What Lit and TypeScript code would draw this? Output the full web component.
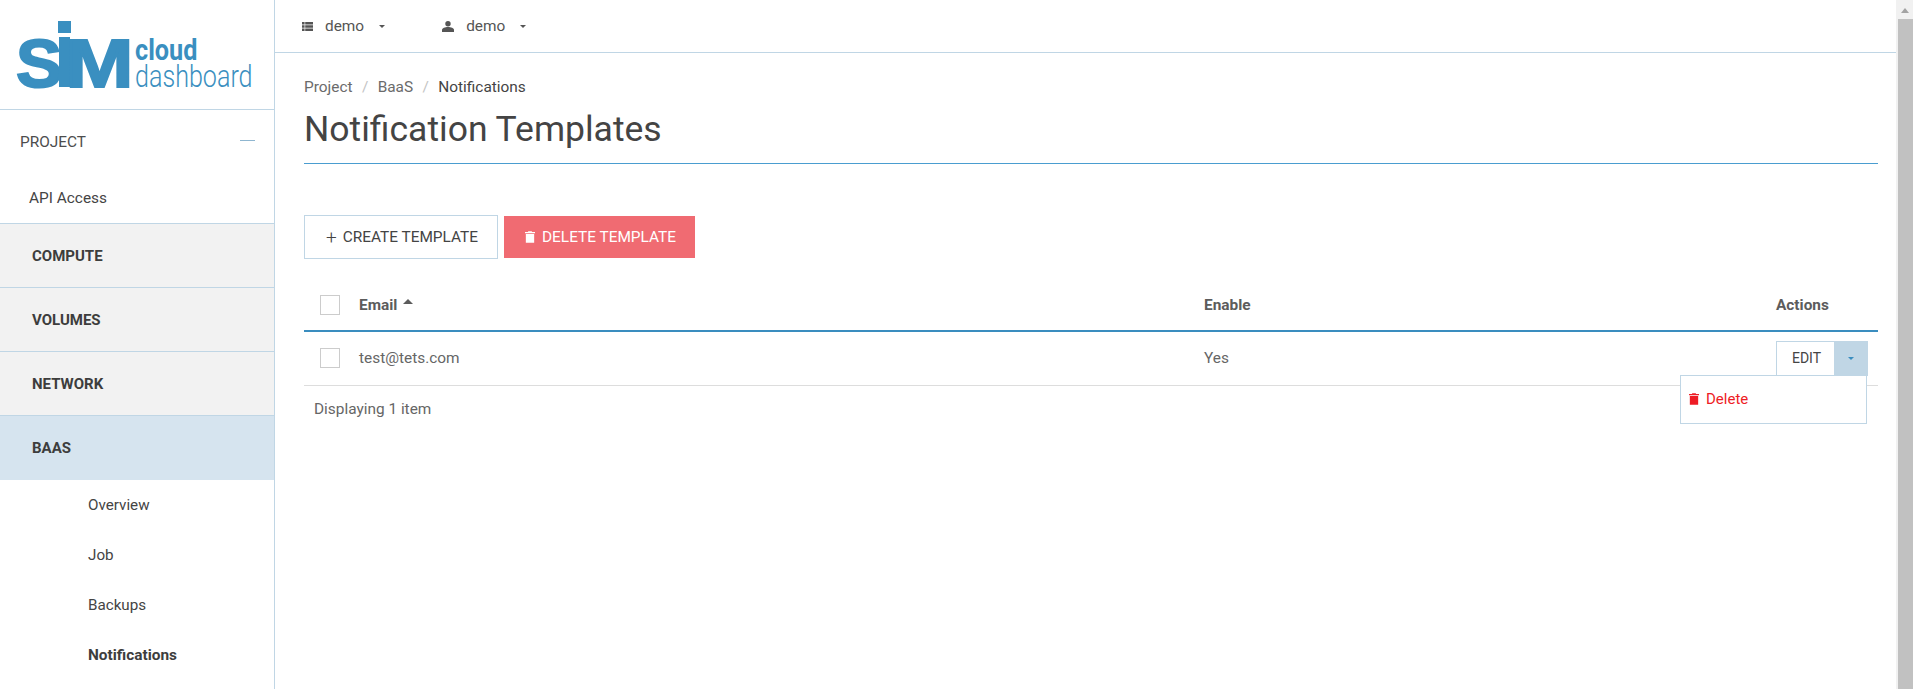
import { LitElement, html, css, svg } from "lit";
import { customElement } from "lit/decorators.js";

const trash = () => svg`<svg viewBox="0 0 12 14" width="10" height="12"><path fill="currentColor" d="M4 0h4l.6 1H12v1.6H0V1h3.4zM1 3.4h10V14H1z"/></svg>`;

@customElement("app-root")
export class AppRoot extends LitElement {
  static styles = css`
    :host { display: flex; height: 689px; overflow: hidden; font-family: Roboto, "Liberation Sans", sans-serif; font-size: 15.4px; color: #555; background: #fff; }
    * { box-sizing: border-box; }
    .side { width: 275px; flex: none; height: 689px; border-right: 1px solid #c0d6e5; overflow: hidden; }
    .logo { height: 110px; border-bottom: 1px solid #c0d6e5; }
    .logo svg { display: block; }
    .proj { height: 114px; border-bottom: 1px solid #c0d6e5; }
    .proj-head { display: flex; justify-content: space-between; align-items: center; padding: 0 19px 0 20px; height: 63px; color: #4d4d4d; }
    .dash { width: 15px; height: 1px; background: #8fb6d0; margin-bottom: 3px; }
    .api { padding-left: 29px; color: #444; height: 49px; display: flex; align-items: center; }
    .sec { height: 64px; padding-left: 32px; display: flex; align-items: center; font-weight: 700; font-size: 15px; color: #3d3d3d; background: #f2f2f2; border-bottom: 1px solid #c0d6e5; }
    .sec.on { background: #d6e4ef; border-bottom: 0; }
    .sub { height: 50px; padding-left: 88px; display: flex; align-items: center; font-size: 15.2px; color: #444; }
    .sub.b { font-weight: 700; font-size: 15.4px; color: #3d3d3d; }
    .main { flex: 1; min-width: 0; display: flex; flex-direction: column; }
    .top { height: 53px; flex: none; border-bottom: 1px solid #c0d6e5; display: flex; align-items: center; padding-left: 27px; color: #555; }
    .tnav { display: flex; align-items: center; }
    .tnav + .tnav { margin-left: 57px; }
    .tnav svg { margin-right: 12px; color: #555; }
    .caret { width: 0; height: 0; border-left: 3px solid transparent; border-right: 3px solid transparent; border-top: 3px solid #555; margin-left: 15px; }
    .content { padding: 0 18px 0 29px; }
    .crumbs { display: flex; align-items: center; height: 24px; margin-top: 22px; color: #6b6b6b; }
    .crumbs i { font-style: normal; color: #c4c4c4; margin: 0 9.4px; }
    .crumbs b { font-weight: 400; color: #444; }
    h1 { margin: 0; font-size: 35.5px; font-weight: 400; color: #444; line-height: 48px; padding-top: 6px; border-bottom: 1px solid #4a9dd0; height: 65px; }
    .btns { display: flex; gap: 6px; margin-top: 51px; align-items: center; }
    .btn { display: flex; align-items: center; justify-content: center; padding-left: 2px; }
    .create { width: 194px; height: 44px; border: 1px solid #c0d6e5; color: #444; }
    .create span { font-size: 19px; margin-right: 6px; font-weight: 300; line-height: 1; }
    .delete { width: 191px; height: 42px; background: #f06b72; color: #fff; }
    .delete svg { margin-right: 7px; }
    .row { display: grid; grid-template-columns: 55px 845px 572px 102px; align-items: center; position: relative; }
    .head { height: 58px; margin-top: 15px; padding-top: 6px; border-bottom: 2px solid #3a8dbf; font-weight: 700; color: #5c5c5c; }
    .body { height: 54px; padding-bottom: 2px; border-bottom: 1px solid #ddd; color: #666; }
    .cell { padding-left: 16px; display: flex; }
    .cb { width: 20px; height: 20px; border: 1px solid #ccc; }
    .up { display: inline-block; width: 0; height: 0; border-left: 5px solid transparent; border-right: 5px solid transparent; border-bottom: 5px solid #5c5c5c; margin-left: 6px; vertical-align: 6px; }
    .foot { padding: 12px 0 0 10px; color: #666; line-height: 22px; }
    .group { display: flex; height: 35px; width: 92px; position: absolute; left: 1472px; top: 9px; }
    .edit { flex: 1; border: 1px solid #c0d6e5; border-right: 0; display: flex; align-items: center; justify-content: center; padding: 0 0 1px 2px; font-size: 14px; color: #444; }
    .tog { width: 34px; background: #c0d6e5; display: flex; align-items: center; justify-content: center; }
    .tog span { width: 0; height: 0; border-left: 3px solid transparent; border-right: 3px solid transparent; border-top: 3px solid #3a8dbf; }
    .menu { position: absolute; left: 1376px; top: 43px; width: 187px; height: 49px; background: #fff; border: 1px solid #c0d6e5; display: flex; align-items: center; padding: 0 0 1px 8px; color: #ee1c25; font-size: 15px; z-index: 2; }
    .menu svg { margin-right: 7px; }
    .sb { width: 17px; flex: none; background: #f1f1f1; position: relative; padding: 19px 0 0 2px; }
    .sb::before { content: ""; position: absolute; left: 5px; top: 8px; border-left: 4.5px solid transparent; border-right: 4.5px solid transparent; border-bottom: 5px solid #a3a3a3; }
    .thumb { height: 100%; background: #c1c1c1; }
    .lg { fill: #3a8fc0; }
    .lgs { font-family: "Liberation Sans", sans-serif; font-weight: 700; font-size: 68px; stroke: #3a8fc0; stroke-width: 2px; }
    .lgc { font-family: Roboto, sans-serif; font-weight: 700; font-size: 29px; }
    .lgd { font-family: Roboto, sans-serif; font-weight: 300; font-size: 32px; }
  `;

  render() {
    return html`
      <nav class="side">
        <div class="logo">
          <svg width="274" height="109" viewBox="0 0 274 109">
            <text class="lg lgs" transform="translate(16 87) scale(1.02 1)">S</text>
            <rect class="lg" x="59" y="37" width="11" height="50"/>
            <rect class="lg" x="58" y="21" width="13" height="12"/>
            <text class="lg lgs" transform="translate(65.5 87) scale(1.2 1)">M</text>
            <text class="lg lgc" transform="translate(135 60) scale(.87 1)">cloud</text>
            <text class="lg lgd" transform="translate(135 87) scale(.785 1)">dashboard</text>
          </svg>
        </div>
        <div class="proj">
          <div class="proj-head"><span>PROJECT</span><span class="dash"></span></div>
          <div class="api">API Access</div>
        </div>
        <div class="sec">COMPUTE</div>
        <div class="sec">VOLUMES</div>
        <div class="sec">NETWORK</div>
        <div class="sec on">BAAS</div>
        <div class="sub">Overview</div>
        <div class="sub">Job</div>
        <div class="sub">Backups</div>
        <div class="sub b">Notifications</div>
      </nav>
      <div class="main">
        <header class="top">
          <div class="tnav">
            <svg width="11" height="9" viewBox="0 0 11 9"><path fill="currentColor" d="M0 0h2.6v2.6H0zM3.2 0H11v2.6H3.2zM0 3.2h2.6v2.6H0zM3.2 3.2H11v2.6H3.2zM0 6.4h2.6V9H0zM3.2 6.4H11V9H3.2z"/></svg>
            demo<span class="caret"></span>
          </div>
          <div class="tnav">
            <svg width="12" height="11" viewBox="0 0 12 11"><circle cx="6" cy="2.7" r="2.7" fill="currentColor"/><path fill="currentColor" d="M0 11V9c0-2 3-3 6-3s6 1 6 3v2z"/></svg>
            demo<span class="caret"></span>
          </div>
        </header>
        <div class="content">
          <div class="crumbs"><span>Project</span><i>/</i><span>BaaS</span><i>/</i><b>Notifications</b></div>
          <h1>Notification Templates</h1>
          <div class="btns">
            <div class="btn create"><span>+</span>CREATE TEMPLATE</div>
            <div class="btn delete">${trash()}DELETE TEMPLATE</div>
          </div>
          <div class="row head">
            <div class="cell"><span class="cb"></span></div>
            <div>Email<span class="up"></span></div>
            <div>Enable</div>
            <div>Actions</div>
          </div>
          <div class="row body">
            <div class="cell"><span class="cb"></span></div>
            <div>test@tets.com</div>
            <div>Yes</div>
            <div></div>
            <div class="group"><div class="edit">EDIT</div><div class="tog"><span></span></div></div>
            <div class="menu">${trash()}Delete</div>
          </div>
          <div class="foot">Displaying 1 item</div>
        </div>
      </div>
      <div class="sb"><div class="thumb"></div></div>
    `;
  }
}
